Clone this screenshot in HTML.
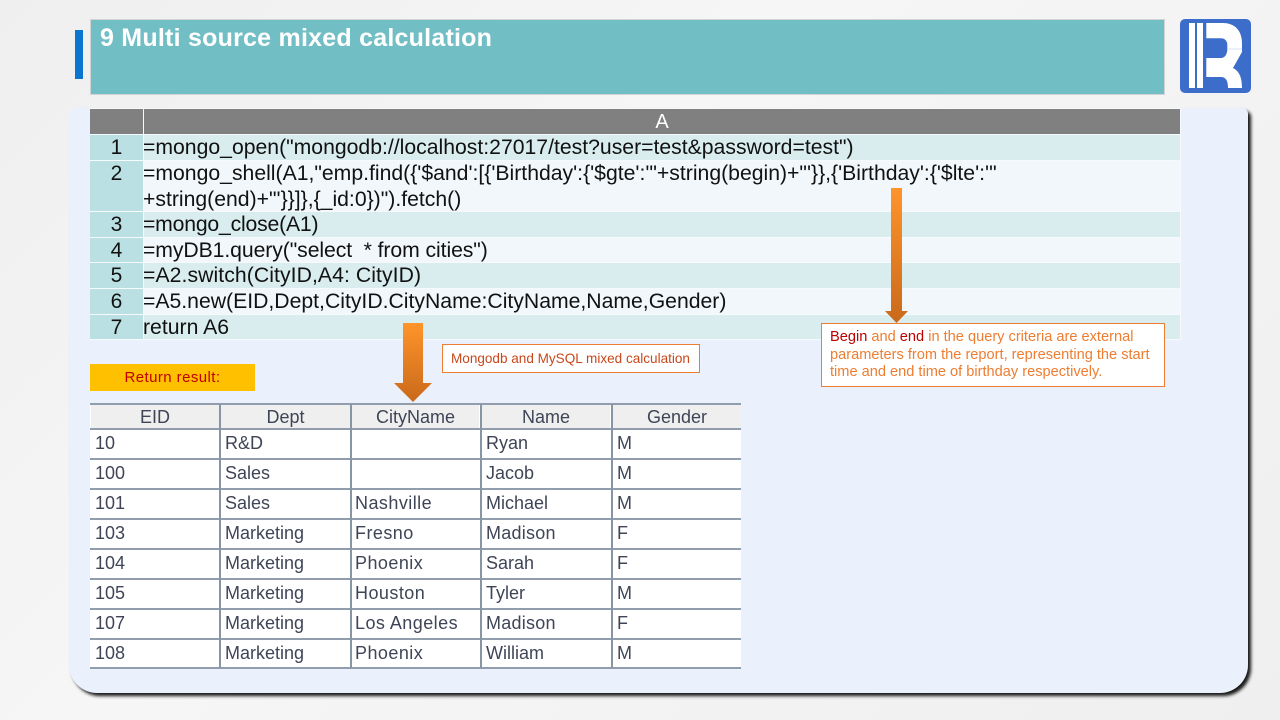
<!DOCTYPE html>
<html><head><meta charset="utf-8"><style>
html,body{margin:0;padding:0}
body{width:1280px;height:720px;overflow:hidden;position:relative;background:#f2f2f2;font-family:"Liberation Sans",sans-serif;color:#000}
div{position:absolute;box-sizing:border-box;white-space:nowrap}
.r{left:90px;width:53px;background:#bae0e3;text-align:center;font-size:21px;color:#111;line-height:25px;padding-top:0}
.c{left:144px;width:1036px;font-size:21.200px;color:#111;line-height:26px}
.c span{position:relative;left:-1px;top:0}
.d{background:#d9edef}.l{background:#f1f7fb}
.h{background:#efefef;height:23px;top:405px;font-size:18px;color:#3f4557;text-align:center;line-height:25px}
.t{font-size:18px;color:#3f4557;line-height:24px}
.s{letter-spacing:.45px}
.m{letter-spacing:.25px}
.v{width:2px;background:#8795a5;top:404px;height:264px}
.hl{left:90px;width:651px;height:2px;background:#8f9dad}
</style></head><body>
<div style="left:0;top:0;width:1280px;height:720px;background:linear-gradient(135deg,#efefef,#f6f6f6 40%,#efefef)"></div>
<div style="left:69px;top:108px;width:1179px;height:585px;background:#eaf1fd;border-radius:6px 6px 28px 28px;box-shadow:3px 3px 3px rgba(0,0,0,.9)"></div>
<div style="left:75px;top:30px;width:8px;height:49px;background:#0b76cf"></div>
<div style="left:90px;top:19px;width:1075px;height:76px;background:#72bec5;border:1px solid #d0d4d4;color:#fff;font-weight:bold;font-size:25px;letter-spacing:.23px;padding:3px 0 0 9px;line-height:30px">9 Multi source mixed calculation</div>
<svg style="position:absolute;left:1180px;top:19px" width="71" height="74" viewBox="0 0 71 74"><rect width="71" height="74" rx="5" fill="#3c6dcb"/><path d="M9 4h6v65H9zM17 4h6v65h-6z" fill="#fff"/><path d="M26.300 4H43C55 4 62 12 62 24V33L53 49C59 52 62 58 62 69H48C48 62 46 58 41 58H26.300V39H41C45 39 47.300 35 47.300 30V26C47.300 22 45 19.300 41 19.300H26.300Z" fill="#fff"/><path d="M47.300 30H62" stroke="#c5d2ee" stroke-width=".7"/></svg>

<div style="left:90px;top:108px;width:1091px;height:232px;background:#f7fafc"></div>
<div style="left:90px;top:109px;width:53px;height:25px;background:#808080"></div>
<div style="left:144px;top:109px;width:1036px;height:25px;background:#808080;color:#fff;text-align:center;font-size:20px;line-height:25px;padding-top:1px">A</div>

<div class="r" style="top:135px;height:25px">1</div><div class="c d" style="top:135px;height:25px"><span>=mongo_open("mongodb://localhost:27017/test?user=test&amp;password=test")</span></div>
<div class="r" style="top:161px;height:50px">2</div><div class="c l" style="top:161px;height:50px"><span>=mongo_shell(A1,"emp.find({'$and':[{'Birthday':{'$gte':'"+string(begin)+"'}},{'Birthday':{'$lte':'"<br>+string(end)+"'}}]},{_id:0})").fetch()</span></div>
<div class="r" style="top:212px;height:25px">3</div><div class="c d" style="top:212px;height:25px"><span style="letter-spacing:-.19px">=mongo_close(A1)</span></div>
<div class="r" style="top:238px;height:24px">4</div><div class="c l" style="top:238px;height:24px"><span style="letter-spacing:-.08px">=myDB1.query("select&nbsp; * from cities")</span></div>
<div class="r" style="top:263px;height:25px">5</div><div class="c d" style="top:263px;height:25px"><span style="letter-spacing:.07px">=A2.switch(CityID,A4: CityID)</span></div>
<div class="r" style="top:289px;height:25px">6</div><div class="c l" style="top:289px;height:25px"><span>=A5.new(EID,Dept,CityID.CityName:CityName,Name,Gender)</span></div>
<div class="r" style="top:315px;height:24px">7</div><div class="c d" style="top:315px;height:24px"><span>return A6</span></div>

<div style="left:90px;top:364px;width:165px;height:27px;background:#ffc000;color:#c00000;font-size:15px;letter-spacing:.42px;text-align:center;line-height:27px">Return result:</div>
<div style="left:442px;top:344px;width:258px;height:29px;background:#fff;border:1px solid #ed7d31;color:#c9471b;font-size:13.550px;line-height:27px;padding-left:8px">Mongodb and MySQL mixed calculation</div>

<div style="left:90px;top:404px;width:651px;height:264px;background:#fff"></div>
<div class="hl" style="top:403px"></div>
<div class="h" style="left:91px;width:128px">EID</div><div class="h" style="left:221px;width:129px">Dept</div><div class="h" style="left:352px;width:127px">CityName</div><div class="h" style="left:482px;width:128px">Name</div><div class="h" style="left:613px;width:128px">Gender</div>
<div class="hl" style="top:428px"></div><div class="hl" style="top:458px"></div><div class="hl" style="top:488px"></div><div class="hl" style="top:518px"></div><div class="hl" style="top:548px"></div><div class="hl" style="top:578px"></div><div class="hl" style="top:608px"></div><div class="hl" style="top:638px"></div><div class="hl" style="top:667px"></div>
<div class="v" style="left:219px"></div><div class="v" style="left:350px"></div><div class="v" style="left:480px"></div><div class="v" style="left:611px"></div>

<div class="t" style="left:95px;top:431px">10</div><div class="t" style="left:225px;top:431px">R&amp;D</div><div class="t" style="left:486px;top:431px">Ryan</div><div class="t" style="left:617px;top:431px">M</div>
<div class="t" style="left:95px;top:461px">100</div><div class="t" style="left:225px;top:461px">Sales</div><div class="t" style="left:486px;top:461px">Jacob</div><div class="t" style="left:617px;top:461px">M</div>
<div class="t" style="left:95px;top:491px">101</div><div class="t" style="left:225px;top:491px">Sales</div><div class="t s" style="left:355px;top:491px">Nashville</div><div class="t" style="left:486px;top:491px">Michael</div><div class="t" style="left:617px;top:491px">M</div>
<div class="t" style="left:95px;top:521px">103</div><div class="t" style="left:225px;top:521px">Marketing</div><div class="t s" style="left:355px;top:521px">Fresno</div><div class="t m" style="left:486px;top:521px">Madison</div><div class="t" style="left:617px;top:521px">F</div>
<div class="t" style="left:95px;top:551px">104</div><div class="t" style="left:225px;top:551px">Marketing</div><div class="t s" style="left:355px;top:551px">Phoenix</div><div class="t" style="left:486px;top:551px">Sarah</div><div class="t" style="left:617px;top:551px">F</div>
<div class="t" style="left:95px;top:581px">105</div><div class="t" style="left:225px;top:581px">Marketing</div><div class="t s" style="left:355px;top:581px">Houston</div><div class="t" style="left:486px;top:581px">Tyler</div><div class="t" style="left:617px;top:581px">M</div>
<div class="t" style="left:95px;top:611px">107</div><div class="t" style="left:225px;top:611px">Marketing</div><div class="t s" style="left:355px;top:611px">Los Angeles</div><div class="t m" style="left:486px;top:611px">Madison</div><div class="t" style="left:617px;top:611px">F</div>
<div class="t" style="left:95px;top:641px">108</div><div class="t" style="left:225px;top:641px">Marketing</div><div class="t s" style="left:355px;top:641px">Phoenix</div><div class="t" style="left:486px;top:641px">William</div><div class="t" style="left:617px;top:641px">M</div>

<svg style="position:absolute;left:380px;top:180px;overflow:visible" width="540" height="230" viewBox="0 0 540 230">
<defs><linearGradient id="g1" x1="0" y1="0" x2="0" y2="1"><stop offset="0" stop-color="#ff942b"/><stop offset="1" stop-color="#c9691b"/></linearGradient></defs>
<path d="M23 143H43V203H52L33 222 14 203H23Z" fill="url(#g1)"/>
<path d="M511 8H522V131H528L516.500 143 505 131H511Z" fill="url(#g1)"/>
</svg>

<div style="left:821px;top:323px;width:344px;height:64px;background:#fff;border:1px solid #ed7d31;color:#ed7d31;font-size:14.600px;line-height:17.500px;padding:5px 0 0 8px">
<span style="color:#c00000">Begin</span> and <span style="color:#c00000">end</span> in the query criteria are external<br>parameters from the report, representing the start<br>time and end time of birthday respectively.</div>
</body></html>
